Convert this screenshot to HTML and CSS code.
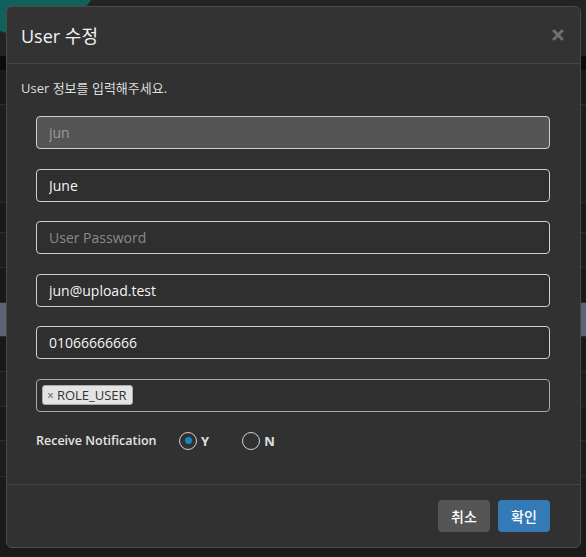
FILE: index.html
```html
<!DOCTYPE html>
<html lang="ko">
<head>
<meta charset="utf-8">
<title>User 수정</title>
<link rel="stylesheet" href="styles.css">
</head>
<body>
<div class="page">
  <div class="topbar"><span class="logo"></span></div>
  <div class="thead"></div>
  <div class="row r35"></div>
  <div class="row r98"></div>
  <div class="row r30"></div>
  <div class="row r35"></div>
  <div class="row r35"></div>
  <div class="row r34 selected"></div>
  <div class="row r35"></div>
  <div class="row r35"></div>
  <div class="row r34"></div>
  <div class="row r36"></div>
</div>

<div class="modal">
  <div class="modal-header">
    <h4 class="modal-title">User 수정</h4>
    <button class="close" type="button" aria-label="close">
      <svg width="12" height="12" viewBox="0 0 12 12"><path d="M2 2 L10 10 M10 2 L2 10" stroke="#707070" stroke-width="3" stroke-linecap="round"/></svg>
    </button>
  </div>
  <div class="modal-body">
    <p class="intro">User 정보를 입력해주세요.</p>
    <div class="form">
      <input class="field disabled" type="text" value="jun" disabled>
      <input class="field" type="text" value="June">
      <input class="field" type="password" placeholder="User Password">
      <input class="field" type="text" value="jun@upload.test">
      <input class="field" type="text" value="01066666666">
      <div class="field tags">
        <span class="tag"><span class="tag-x">×</span>ROLE_USER</span>
      </div>
    </div>
    <div class="radio-row">
      <span class="radio-label">Receive Notification</span>
      <label class="radio"><span class="circle checked"></span><span class="rtext">Y</span></label>
      <label class="radio"><span class="circle"></span><span class="rtext">N</span></label>
    </div>
  </div>
  <div class="modal-footer">
    <button class="btn btn-cancel" type="button">취소</button>
    <button class="btn btn-ok" type="button">확인</button>
  </div>
</div>
</body>
</html>
```

FILE: styles.css
```css
html, body {
  margin: 0;
  padding: 0;
}
body {
  width: 586px;
  height: 557px;
  overflow: hidden;
  position: relative;
  background: #1a1a1a;
  font-family: "Open Sans", "Noto Sans CJK KR", sans-serif;
}

/* underlying page */
.page {
  display: flex;
  flex-direction: column;
}
.topbar {
  height: 56px;
  background: #232323;
  position: relative;
  overflow: hidden;
}
.logo {
  position: absolute;
  left: -55px;
  top: -125px;
  width: 160px;
  height: 160px;
  border-radius: 50%;
  background: #12605b;
}
.thead {
  height: 14px;
  background: #0b0b0b;
}
.row {
  background: #1d1d1d;
  border-bottom: 1px solid #2c2c2c;
  box-sizing: border-box;
}
.row:nth-child(odd) { background: #191919; }
.r30 { height: 30px; }
.r34 { height: 34px; }
.r35 { height: 35px; }
.r36 { height: 36px; }
.r98 { height: 98px; }
.row.selected { background: #5b6474; }

/* modal */
.modal {
  position: absolute;
  left: 6px;
  top: 6px;
  width: 575px;
  box-sizing: border-box;
  border: 1px solid #4a4a4a;
  border-radius: 6px;
  background: #313131;
  display: flex;
  flex-direction: column;
}
.modal-header {
  height: 57px;
  box-sizing: border-box;
  padding: 0 16px 0 14px;
  display: flex;
  align-items: center;
  border-bottom: 1px solid #474747;
  background: #333333;
  border-radius: 6px 6px 0 0;
}
.modal-title {
  margin: 0;
  font-size: 18px;
  font-weight: 400;
  color: #f2f2f2;
  line-height: 26px;
  padding-top: 1px;
}
.close {
  margin-left: auto;
  background: none;
  border: 0;
  padding: 0;
  width: 12px;
  height: 12px;
  display: flex;
}
.modal-body {
  height: 420px;
  box-sizing: border-box;
  padding: 15px 30px 0 14px;
}
.intro {
  margin: 0;
  font-size: 13px;
  line-height: 18px;
  color: #dedede;
  font-weight: 400;
}
.form {
  margin: 19px 0 0 15px;
  display: flex;
  flex-direction: column;
  gap: 19.6px;
}
.field {
  display: block;
  width: 514px;
  height: 33px;
  box-sizing: border-box;
  border: 1px solid #cfcfcf;
  border-radius: 4px;
  background: #2f2f2f;
  color: #f4f4f4;
  padding: 0 12px;
  font-family: "Open Sans", "Noto Sans CJK KR", sans-serif;
  font-size: 14px;
  outline: none;
}
.field::placeholder { color: #8a8a8a; }
.field.disabled {
  background: #555555;
  color: #9a9a9a;
}
.tags {
  border-color: #a8a8a8;
  padding: 0 5px;
  display: flex;
  align-items: center;
}
.tag {
  display: inline-flex;
  align-items: center;
  height: 20px;
  box-sizing: border-box;
  padding: 0 5px 0 4px;
  border: 1px solid #aaa;
  border-radius: 3px;
  background: #e4e4e4;
  color: #333;
  font-size: 13px;
}
.tag-x {
  color: #888;
  font-weight: 700;
  font-size: 12px;
  margin-right: 3px;
}
.radio-row {
  margin: 19px 0 0 15px;
  height: 20px;
  display: flex;
  align-items: center;
}
.radio-label {
  width: 143px;
  font-size: 12.5px;
  font-weight: 600;
  color: #e4e4e4;
}
.radio {
  display: flex;
  align-items: center;
  gap: 4px;
  margin-right: 33px;
}
.circle {
  width: 18px;
  height: 18px;
  box-sizing: border-box;
  border: 1.5px solid #d0d0d0;
  border-radius: 50%;
  display: flex;
  align-items: center;
  justify-content: center;
}
.circle.checked::after {
  content: "";
  width: 7px;
  height: 7px;
  border-radius: 50%;
  background: #1a86c8;
}
.rtext {
  font-size: 13px;
  font-weight: 700;
  color: #e0e0e0;
}
.modal-footer {
  border-top: 1px solid #474747;
  padding: 15px 30px 15px 15px;
  display: flex;
  justify-content: flex-end;
  gap: 8px;
}
.btn {
  width: 52px;
  height: 32px;
  border: 0;
  border-radius: 4px;
  color: #fff;
  font-family: "Noto Sans CJK KR", sans-serif;
  font-size: 14px;
  font-weight: 500;
  padding: 0;
}
.btn-cancel { background: #555555; }
.btn-ok { background: #337ab7; }
```
